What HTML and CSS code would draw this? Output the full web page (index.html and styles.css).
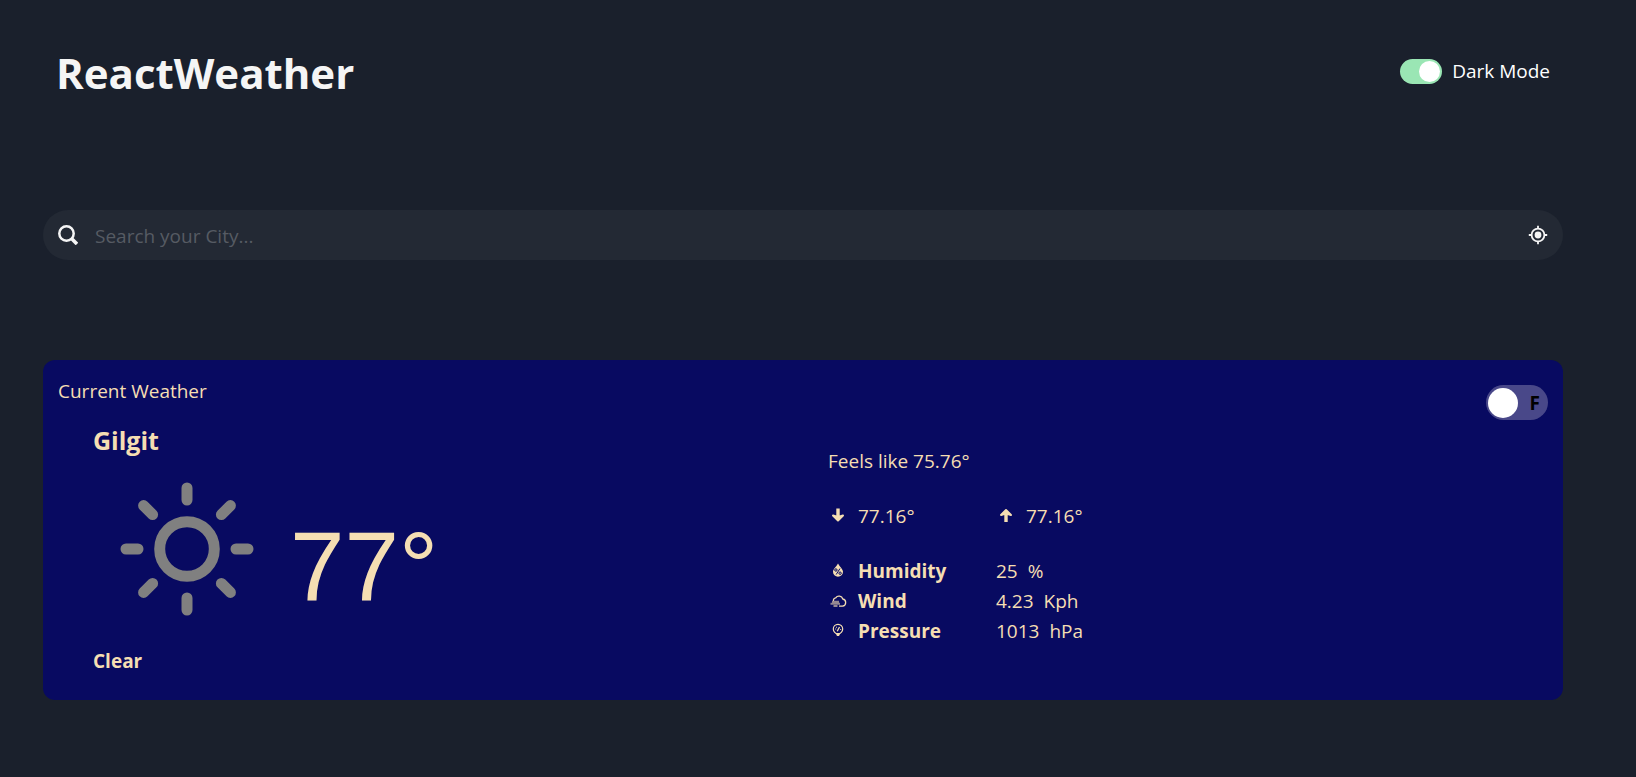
FILE: index.html
```html
<!DOCTYPE html>
<html lang="en">
<head>
<meta charset="utf-8">
<meta name="viewport" content="width=device-width, initial-scale=1">
<title>ReactWeather</title>
<link rel="stylesheet" href="styles.css">
</head>
<body>
<div class="page">
  <header class="header">
    <h1 class="title">ReactWeather</h1>
    <label class="mode">
      <input class="mode-input" type="checkbox" role="switch" checked>
      <span>Dark Mode</span>
    </label>
  </header>

  <form class="search">
    <button class="icon-button" type="submit" aria-label="Search">
      <svg width="20" height="20" viewBox="0 0 20 20" fill="none" stroke="currentColor"><circle cx="8.5" cy="8.5" r="7.2" stroke-width="2.5"/><path d="M14 14l5 5" stroke-width="3.6"/></svg>
    </button>
    <input class="search-input" type="text" placeholder="Search your City..." aria-label="City">
    <button class="icon-button" type="button" aria-label="Use my location">
      <svg width="20" height="20" viewBox="0 0 20 20" fill="none" stroke="currentColor" stroke-width="1.8"><circle cx="10" cy="10" r="6.4"/><circle cx="10" cy="10" r="3.4" fill="currentColor" stroke="none"/><path d="M10 .8v2.8M10 16.4v2.8M.8 10h2.8M16.4 10h2.8"/></svg>
    </button>
  </form>

  <main class="card">
    <div class="card-head">
      <h2 class="card-title">Current Weather</h2>
      <label class="unit">
        <input class="unit-input" type="checkbox" role="switch" aria-label="Temperature unit">
        <span class="unit-name">F</span>
      </label>
    </div>
    <div class="card-body">
      <section class="now">
        <h3 class="city">Gilgit</h3>
        <div class="reading">
          <svg class="sun" width="134" height="134" viewBox="0 0 134 134" fill="none" stroke="currentColor" stroke-width="11" stroke-linecap="round"><circle cx="67" cy="67" r="27.3"/><path d="M67 6v12M67 116v12M6 67h12M116 67h12M23.6 23.6l9 9M101.400 101.400l9 9M23.600 110.400l9-9M101.400 32.600l9-9"/></svg>
          <span class="temp">77°</span>
        </div>
        <p class="condition">Clear</p>
      </section>
      <section class="details">
        <p class="feels">Feels like 75.76°</p>
        <div class="range">
          <span class="bound">
            <svg width="20" height="20" viewBox="0 0 20 20" fill="none" stroke="currentColor" stroke-width="3.4" stroke-linejoin="round"><path d="M10 2.500v9"/><path d="M5 9.500L10 14.500L15 9.500Q10 11.500 5 9.500Z" fill="currentColor" stroke-width="2"/></svg>
            77.16°
          </span>
          <span class="bound">
            <svg width="20" height="20" viewBox="0 0 20 20" fill="none" stroke="currentColor" stroke-width="3.4" stroke-linejoin="round"><path d="M10 16V7"/><path d="M5 9L10 4L15 9Q10 7 5 9Z" fill="currentColor" stroke-width="2"/></svg>
            77.16°
          </span>
        </div>
        <table class="stats">
          <tr>
            <td class="stat-icon"><svg width="20" height="20" viewBox="0 0 20 20" fill="none"><path d="M10 2.500C8 6 5 8.300 5 10.800a5 5 0 0 0 10 0C15 8.300 12 6 10 2.500z" fill="currentColor"/><g class="cut"><path d="M12 7.500l-3.800 6"/><circle cx="7.900" cy="9" r="1.200"/><circle cx="12.100" cy="12.200" r="1.200"/></g></svg></td>
            <th class="stat-name" scope="row">Humidity</th>
            <td class="stat-value"><span>25</span><span>%</span></td>
          </tr>
          <tr>
            <td class="stat-icon"><svg width="20" height="20" viewBox="0 0 20 20" fill="none" stroke="currentColor"><path d="M5.500 10a2.600 2.600 0 0 1 2.200-3.200A4 4 0 0 1 14.800 8a3.600 3.600 0 0 1-.3 7.100H11" stroke-width="1.300"/><path d="M4 10.800h7M2.500 12.800h9.500M5.500 14.900h4" stroke-width="2" opacity=".6"/></svg></td>
            <th class="stat-name" scope="row">Wind</th>
            <td class="stat-value"><span>4.23</span><span>Kph</span></td>
          </tr>
          <tr>
            <td class="stat-icon"><svg width="20" height="20" viewBox="0 0 20 20" fill="none" stroke="currentColor"><circle cx="10" cy="8" r="4.700" stroke-width="1.200"/><path d="M9.200 10.200l2.300-4.200" stroke-width="1.300"/><path d="M7 8h1.200M8.500 5.700v1.200M12 8.500h1.200" stroke-width=".8"/><path d="M7.500 12h5l-1.500 3h-2z" fill="currentColor" stroke="none"/></svg></td>
            <th class="stat-name" scope="row">Pressure</th>
            <td class="stat-value"><span>1013</span><span>hPa</span></td>
          </tr>
        </table>
      </section>
    </div>
  </main>
</div>
</body>
</html>
```
FILE: styles.css
```css
* { box-sizing: border-box; }
body {
  margin: 0;
  background: #1a202c;
  color: #fff;
  font: 19px/30px "Segoe UI", "Open Sans", "Noto Sans", sans-serif;
}
h1, h2, h3, p { margin: 0; }
.page { padding: 40px 73px 40px 43px; }

.header {
  display: flex;
  justify-content: space-between;
  align-items: flex-start;
  padding: 0 13px;
}
.title {
  color: #f5f5f5;
  font-size: 42px;
  line-height: 66px;
}
.mode {
  display: flex;
  align-items: center;
  gap: 10px;
  padding-top: 16px;
}
.mode-input, .unit-input {
  appearance: none;
  margin: 0;
  display: flex;
  align-items: center;
  border-radius: 20px;
}
.mode-input::before, .unit-input::before {
  content: "";
  border-radius: 50%;
  background: #fff;
}
.mode-input {
  width: 42px;
  height: 25px;
  padding: 2px;
  background: #9ae6b4;
}
.mode-input::before { width: 21px; height: 21px; }
.mode-input:checked { justify-content: flex-end; }

.search {
  display: flex;
  align-items: center;
  height: 50px;
  margin: 104px 0 100px;
  padding: 0 15px;
  gap: 17px;
  border-radius: 25px;
  background: #232934;
}
.icon-button {
  display: flex;
  padding: 0;
  border: 0;
  background: none;
  color: #f5f5f5;
}
.search-input {
  flex: 1;
  min-width: 0;
  padding: 2px 0 0;
  border: 0;
  outline: 0;
  background: none;
  color: #f5f5f5;
  font: inherit;
}
.search-input::placeholder { color: #565b63; opacity: 1; }

.card {
  padding: 16px 15px 24px;
  border-radius: 12px;
  background: #080a61;
  color: #f5deb3;
}
.card-head {
  display: flex;
  justify-content: space-between;
}
.card-title { font-size: 19px; font-weight: 400; }
.unit {
  display: grid;
  align-items: center;
  margin-top: 9px;
}
.unit-input, .unit-name { grid-area: 1 / 1; }
.unit-input {
  width: 62px;
  height: 35px;
  padding: 2px;
  background: #494889;
}
.unit-input::before { width: 30px; height: 30px; }
.unit-input:checked { justify-content: flex-end; }
.unit-name {
  justify-self: end;
  padding-right: 8px;
  color: #000;
  font-weight: 700;
}

.card-body {
  display: grid;
  grid-template-columns: 1fr 1fr;
}
.now { padding-left: 35px; }
.city { font-size: 25px; line-height: 40px; }
.reading {
  display: flex;
  align-items: center;
  gap: 36px;
  padding: 22px 0 30px 27px;
}
.sun { color: #808080; }
.temp {
  padding-top: 34px;
  font: 98px/100px "Liberation Sans", Arial, sans-serif;
}
.condition { font-weight: 700; }

.details { padding: 26px 0 0 25px; }
.range {
  display: grid;
  grid-template-columns: 168px 1fr;
  margin: 25px 0;
}
.bound {
  display: flex;
  align-items: center;
  gap: 10px;
}
.stats { border-collapse: collapse; }
.stats td, .stats th { padding: 0; text-align: left; }
.stat-icon { width: 30px; }
.stat-icon svg { display: block; }
.stat-name { width: 138px; }
.stat-value span + span { margin-left: 10px; }
.cut { stroke: #080a61; stroke-width: 1; }
```
